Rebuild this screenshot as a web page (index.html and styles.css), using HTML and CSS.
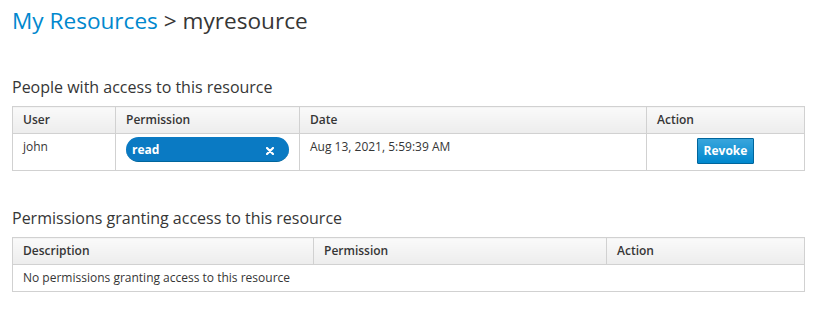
FILE: index.html
```html
<!DOCTYPE html>
<html lang="en">
<head>
    <meta charset="UTF-8">
    <meta name="viewport" content="width=device-width, initial-scale=1.0">
    <title>myresource</title>
    <link rel="stylesheet" href="styles.css">
</head>
<body>
    <div class="page">
        <h1 class="title"><a href="#" class="crumb">My Resources</a> &gt; myresource</h1>

        <!-- shared with people -->
        <h2 class="section-title">People with access to this resource</h2>
        <table class="grid">
            <colgroup>
                <col style="width: 103px">
                <col style="width: 184px">
                <col>
                <col style="width: 158px">
            </colgroup>
            <thead>
                <tr>
                    <th>User</th>
                    <th>Permission</th>
                    <th>Date</th>
                    <th>Action</th>
                </tr>
            </thead>
            <tbody>
                <tr>
                    <td>john</td>
                    <td>
                        <div class="chip">
                            <span>read</span>
                            <svg class="chip-close" width="8" height="8" viewBox="0 0 8 8">
                                <path d="M1 1 L7 7 M7 1 L1 7" stroke="#fff" stroke-width="2.2" stroke-linecap="round"/>
                            </svg>
                        </div>
                    </td>
                    <td>Aug 13, 2021, 5:59:39 AM</td>
                    <td class="center"><button class="btn-primary">Revoke</button></td>
                </tr>
            </tbody>
        </table>

        <!-- policies -->
        <h2 class="section-title">Permissions granting access to this resource</h2>
        <table class="grid">
            <colgroup>
                <col style="width: 301px">
                <col style="width: 293px">
                <col>
            </colgroup>
            <thead>
                <tr>
                    <th>Description</th>
                    <th>Permission</th>
                    <th>Action</th>
                </tr>
            </thead>
            <tbody>
                <tr>
                    <td colspan="3">No permissions granting access to this resource</td>
                </tr>
            </tbody>
        </table>
    </div>
</body>
</html>
```

FILE: styles.css
```css
:root {
    --text-color: #363636;
    --link-color: #0088ce;
    --border-color: #d1d1d1;
}

body {
    margin: 0;
    padding: 0;
    font-family: 'Open Sans', 'Liberation Sans', sans-serif;
    font-size: 12px;
    color: var(--text-color);
    background: #fff;
}

.page {
    padding: 8px 13px 0 12px;
}

.title {
    margin: 0 0 44px;
    font-size: 22.6px;
    font-weight: 400;
    line-height: 26px;
}

.crumb {
    color: var(--link-color);
    text-decoration: none;
}

.section-title {
    margin: 0 0 10px;
    font-size: 16px;
    font-weight: 400;
    line-height: 18px;
}

.grid {
    width: 100%;
    border-collapse: collapse;
    table-layout: fixed;
    margin-bottom: 38px;
}

.grid th,
.grid td {
    border: 1px solid var(--border-color);
    padding: 4px 10px 5px;
    line-height: 17px;
    text-align: left;
    vertical-align: top;
}

.grid th {
    font-weight: 600;
    background: linear-gradient(to bottom, #fafafa 0%, #ededed 100%);
}

.grid td.center {
    padding-bottom: 6px;
    text-align: center;
}

/* permission chip */
.chip {
    display: flex;
    align-items: center;
    justify-content: space-between;
    height: 25px;
    margin-top: -1px;
    padding: 0 15px 0 6px;
    box-sizing: border-box;
    border-radius: 13px;
    background: #0a7ac3;
    border-bottom: 1px solid #00659c;
    color: #fff;
    font-weight: 700;
}

.chip-close {
    margin-top: 4px;
}

.btn-primary {
    font-family: inherit;
    font-size: 12px;
    font-weight: 700;
    line-height: 20px;
    padding: 2px 6px;
    color: #fff;
    background: linear-gradient(to bottom, #39a5dc 0%, #0088ce 100%);
    border: 1px solid #00659c;
    border-radius: 1px;
    cursor: pointer;
}
```
